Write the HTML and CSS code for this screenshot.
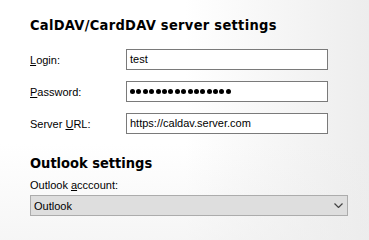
FILE: index.html
```html
<!DOCTYPE html>
<html>
<head>
<meta charset="utf-8">
<link rel="stylesheet" href="styles.css">
</head>
<body>
<div class="page">
  <h1 class="heading heading-1">CalDAV/CardDAV server settings</h1>
  <div class="form">
    <label class="label"><u>L</u>ogin:</label>
    <div class="field">test</div>
    <label class="label"><u>P</u>assword:</label>
    <div class="field dots" aria-label="password">
      <span></span><span></span><span></span><span></span><span></span><span></span><span></span><span></span>
      <span></span><span></span><span></span><span></span><span></span><span></span><span></span><span></span>
    </div>
    <label class="label">Server <u>U</u>RL:</label>
    <div class="field">https://caldav.server.com</div>
  </div>
  <h2 class="heading heading-2">Outlook settings</h2>
  <label class="label label-block">Outlook <u>a</u>cccount:</label>
  <div class="select">
    <span>Outlook</span>
    <svg class="chevron" width="9" height="5" viewBox="0 0 9 5"><path d="M0.5 0.5 L4.5 4.5 L8.5 0.5" fill="none" stroke="#444" stroke-width="1.2"/></svg>
  </div>
</div>
</body>
</html>
```
FILE: styles.css
```css
html, body {
  margin: 0;
  padding: 0;
}
body {
  width: 369px;
  height: 240px;
  overflow: hidden;
  background:
    linear-gradient(to bottom, rgba(255,255,255,0) 60%, rgba(236,236,236,0.5) 100%),
    linear-gradient(to right, #ffffff 50%, #ededed 100%);
  font-family: "Liberation Sans", Arial, sans-serif;
  font-size: 11px;
  color: #000;
}
.page {
  padding: 17px 0 0 30px;
}
.heading {
  margin: 0;
  font-family: "DejaVu Sans", Verdana, sans-serif;
  font-stretch: condensed;
  font-weight: bold;
  font-size: 14.5px;
  line-height: 17px;
  color: #000;
}
.heading-1 {
  letter-spacing: 0.3px;
}
.heading-2 {
  margin-top: 21px;
}
.form {
  display: grid;
  grid-template-columns: 96px 202px;
  grid-auto-rows: 21px;
  row-gap: 11px;
  align-items: center;
  margin-top: 15px;
}
.label {
  line-height: 14px;
}
.label u {
  text-decoration-thickness: 1px;
  text-underline-offset: 1px;
}
.field {
  box-sizing: border-box;
  height: 21px;
  border: 1px solid #7a7a7a;
  background: #fff;
  padding: 0 3px;
  line-height: 19px;
  white-space: nowrap;
  overflow: hidden;
}
.dots {
  display: flex;
  align-items: center;
  gap: 1.4px;
  padding-left: 3px;
}
.dots span {
  width: 5px;
  height: 5px;
  border-radius: 50%;
  background: #000;
  flex: none;
}
.label-block {
  display: block;
  margin-top: 6px;
}
.select {
  box-sizing: border-box;
  margin-top: 3px;
  width: 318px;
  height: 21px;
  border: 1px solid #acacac;
  background: #dedede;
  display: flex;
  align-items: center;
  justify-content: space-between;
  padding: 0 4px 0 3px;
}
.chevron {
  display: block;
}
```
